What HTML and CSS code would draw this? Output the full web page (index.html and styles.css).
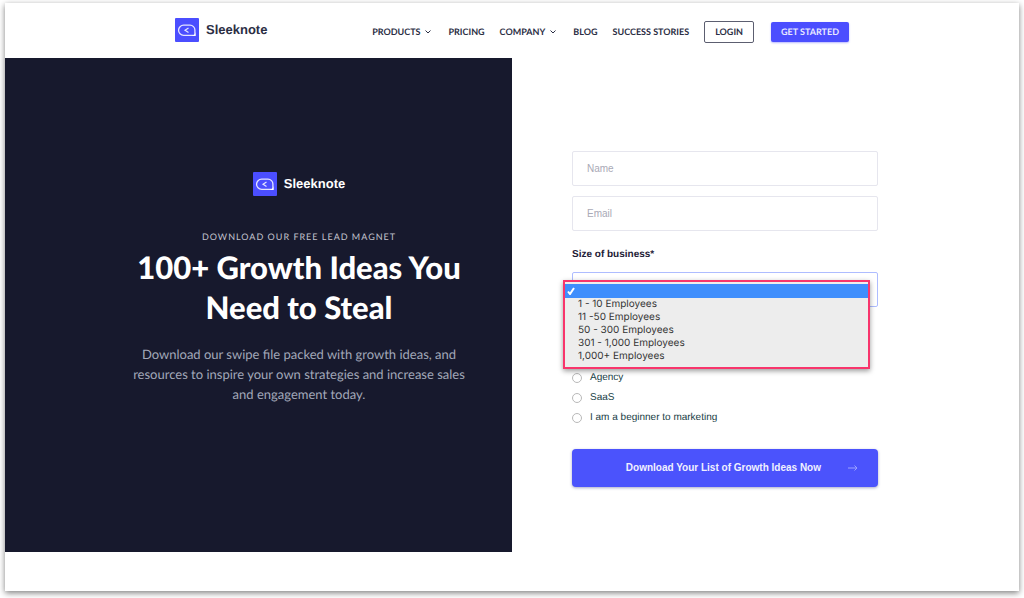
FILE: index.html
```html
<!DOCTYPE html>
<html lang="en">
<head>
<meta charset="utf-8">
<meta name="viewport" content="width=device-width, initial-scale=1">
<title>Sleeknote – 100+ Growth Ideas</title>
<link rel="stylesheet" href="styles.css">
</head>
<body>
<svg class="sprite" aria-hidden="true">
  <symbol id="mark" viewBox="0 0 24 24">
    <rect width="24" height="24" rx="1" fill="#4b4eff"/>
    <path d="M8.600 7.200H15a4.900 4.900 0 0 1 4.900 4.900v5.200H8.600a5.050 5.050 0 0 1 0-10.100z" fill="none" stroke="#e4e4ff" stroke-width="1.300"/>
    <path d="M20.500 13.800v4.100h-4.300c2 0 4.300-1.600 4.300-4.100z" fill="#fff"/>
    <path d="M13.500 9.900l-3.500 2.300 3.500 2.300" fill="none" stroke="#e4e4ff" stroke-width="1.200"/>
  </symbol>
</svg>
<div class="sheet">
  <header class="header">
    <div class="header-inner">
      <a class="brand" href="#"><svg class="brand-mark" aria-hidden="true"><use href="#mark"/></svg>Sleeknote</a>
      <nav class="nav">
        <a class="nav-link nav-menu" href="#">PRODUCTS <svg class="chevron" viewBox="0 0 6 4" aria-hidden="true"><path d="M.5.5L3 3 5.500.5"/></svg></a>
        <a class="nav-link" href="#">PRICING</a>
        <a class="nav-link nav-menu" href="#">COMPANY <svg class="chevron" viewBox="0 0 6 4" aria-hidden="true"><path d="M.5.5L3 3 5.500.5"/></svg></a>
        <a class="nav-link" href="#">BLOG</a>
        <a class="nav-link" href="#">SUCCESS STORIES</a>
        <a class="nav-button login" href="#">LOGIN</a>
        <a class="nav-button start" href="#">GET STARTED</a>
      </nav>
    </div>
  </header>
  <main class="split">
    <section class="pitch">
      <div class="pitch-inner">
        <div class="brand brand-light"><svg class="brand-mark" aria-hidden="true"><use href="#mark"/></svg>Sleeknote</div>
        <p class="eyebrow">DOWNLOAD OUR FREE LEAD MAGNET</p>
        <h1 class="title">100+ Growth Ideas You Need to Steal</h1>
        <p class="lead">Download our swipe file packed with growth ideas, and resources to inspire your own strategies and increase sales and engagement today.</p>
      </div>
    </section>
    <section class="signup">
      <form class="form">
        <input class="field" type="text" placeholder="Name" aria-label="Name">
        <input class="field" type="email" placeholder="Email" aria-label="Email">
        <label class="label" for="size">Size of business*</label>
        <div class="picker">
          <select class="field field-active" id="size"><option></option></select>
          <ul class="menu" role="listbox" aria-label="Size of business">
            <li class="option selected" role="option" aria-selected="true"><svg class="tick" viewBox="0 0 8 8" aria-hidden="true"><path d="M1 4.500L3 7 7 1"/></svg></li>
            <li class="option" role="option">1 - 10 Employees</li>
            <li class="option" role="option">11 -50 Employees</li>
            <li class="option" role="option">50 - 300 Employees</li>
            <li class="option" role="option">301 - 1,000 Employees</li>
            <li class="option" role="option">1,000+ Employees</li>
          </ul>
        </div>
        <div class="choices">
          <label class="choice"><input class="radio" type="radio" name="kind">Agency</label>
          <label class="choice"><input class="radio" type="radio" name="kind">SaaS</label>
          <label class="choice"><input class="radio" type="radio" name="kind">I am a beginner to marketing</label>
        </div>
        <button class="submit" type="button"><span>Download Your List of Growth Ideas Now</span><svg class="arrow" viewBox="0 0 10 6" aria-hidden="true"><path d="M0 3h9M6.500.5L9 3 6.500 5.500"/></svg></button>
      </form>
    </section>
  </main>
</div>
</body>
</html>
```
FILE: styles.css
```css
* { box-sizing: border-box; }
body {
  margin: 0;
  padding: 3px 5px 7px;
  background: #fff;
  font-family: "Liberation Sans", Arial, sans-serif;
  color: #1d2036;
  text-rendering: geometricPrecision;
}
a { color: inherit; text-decoration: none; }
.sprite { display: none; }
.sheet {
  min-height: calc(100vh - 10px);
  background: #fff;
  box-shadow: 0 2px 6px rgba(0, 0, 0, 0.5);
}
.header { padding: 14px 20px 16px; }
.header-inner {
  display: flex;
  justify-content: space-between;
  align-items: center;
  max-width: 674px;
  height: 25px;
  margin: 0 auto;
}
.brand {
  display: flex;
  align-items: center;
  gap: 7px;
  font-size: 13px;
  font-weight: 700;
  line-height: 24px;
  color: #2b2e44;
}
.brand-mark { width: 24px; height: 24px; }
.brand-light { justify-content: center; color: #fff; }
.nav {
  display: flex;
  align-items: center;
  font: 700 9px/12px Lato, sans-serif;
  color: #2b2e44;
  padding-top: 4px;
}
.nav-link { margin-right: 15px; white-space: nowrap; }
.nav-menu { display: flex; align-items: center; gap: 5px; margin-right: 17px; }
.chevron { width: 6px; height: 4px; fill: none; stroke: #2b2e44; }
.nav-button { padding: 4px 10px; border-radius: 2px; white-space: nowrap; }
.login { border: 1px solid #5c5e70; margin-right: 17px; }
.start { background: #4b4eff; color: #e8e8ff; box-shadow: 0 1px 2px rgba(75, 78, 255, 0.4); }
.split { display: grid; grid-template-columns: 1fr 1fr; }
.pitch {
  display: flex;
  justify-content: flex-end;
  padding: 114px 43px 148px 20px;
  background: #17192d;
}
.pitch-inner { width: 340px; text-align: center; }
.eyebrow {
  margin: 35px 0 4px;
  font: 400 9px/12px Lato, sans-serif;
  letter-spacing: 1px;
  color: #c3c4cf;
}
.title {
  margin: 0;
  font: 900 31px/40px Lato, sans-serif;
  color: #fff;
}
.lead {
  margin: 17px 0 0;
  font: 400 13px/20px Lato, sans-serif;
  color: #a2a8b9;
}
.signup { padding: 93px 20px 20px 60px; }
.form { display: flex; flex-direction: column; max-width: 306px; }
.field {
  display: block;
  width: 100%;
  height: 35px;
  margin: 0 0 10px;
  padding: 0 14px;
  border: 1px solid #e6e6ee;
  border-radius: 2px;
  background: #fff;
  font: 400 10px/14px "Liberation Sans", Arial, sans-serif;
  color: #1d2036;
}
.field::placeholder { color: #a9a9b6; opacity: 1; }
.field-active { margin: 0; border-color: #aebcff; appearance: none; }
.label { margin: 7px 0 10px; font-size: 10px; font-weight: 700; line-height: 14px; }
.picker { position: relative; }
.menu {
  position: absolute;
  top: 8px;
  left: -9px;
  right: 8px;
  margin: 0;
  padding: 2px 0 4px;
  list-style: none;
  background: #ededed;
  border: 2px solid #f8356c;
  box-shadow: 0 2px 5px rgba(0, 0, 0, 0.4);
  font: 400 10px/13px Inter, sans-serif;
  color: #343434;
}
.option { padding-left: 13px; }
.selected { display: flex; align-items: center; height: 14px; padding-left: 2px; background: #3f8efc; }
.tick { width: 8px; height: 8px; fill: none; stroke: #fff; stroke-width: 2; }
.choices { margin: 61px 0 21px; }
.choice {
  display: flex;
  align-items: center;
  gap: 8px;
  font-size: 10px;
  line-height: 20px;
  color: #173d45;
}
.radio {
  appearance: none;
  width: 10px;
  height: 10px;
  margin: 0;
  border: 1px solid #b9b9b9;
  border-radius: 50%;
  background: #fff;
}
.submit {
  display: flex;
  align-items: center;
  justify-content: flex-end;
  gap: 27px;
  height: 38px;
  padding: 0 20px;
  border: 0;
  border-radius: 4px;
  background: #4b53fc;
  box-shadow: 0 1px 3px rgba(40, 40, 120, 0.4);
  font: 700 10px/14px "Liberation Sans", Arial, sans-serif;
  color: #f0f0ff;
}
.arrow { width: 10px; height: 6px; fill: none; stroke: #9da2ff; }
```
